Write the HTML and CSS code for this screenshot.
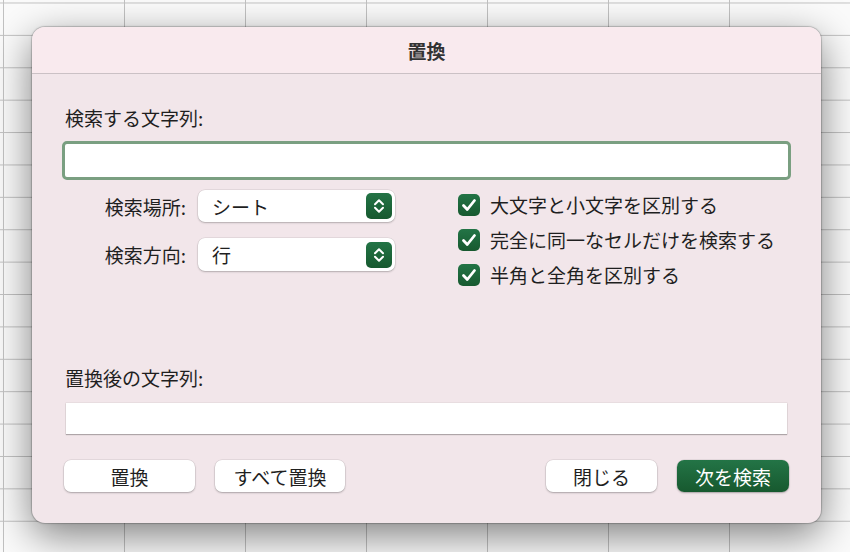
FILE: index.html
```html
<!DOCTYPE html>
<html lang="ja">
<head>
    <meta charset="UTF-8">
    <meta name="viewport" content="width=device-width, initial-scale=1.0">
    <title>置換</title>
    <link rel="stylesheet" href="styles.css">
</head>
<body>
    <div class="sheet">
        <div class="dialog">
            <div class="titlebar">置換</div>

            <div class="content">
                <div class="field-label">検索する文字列:</div>
                <div class="find-input"></div>

                <div class="options">
                    <div class="selects">
                        <div class="select-row">
                            <span class="select-label">検索場所:</span>
                            <div class="popup">
                                <span>シート</span>
                                <span class="stepper">
                                    <svg width="26" height="26" viewBox="0 0 26 26"><path d="M9 11.2 L13 7.2 L17 11.2 M9 14.8 L13 18.8 L17 14.8" fill="none" stroke="#fff" stroke-width="2" stroke-linecap="round" stroke-linejoin="round"/></svg>
                                </span>
                            </div>
                        </div>
                        <div class="select-row">
                            <span class="select-label">検索方向:</span>
                            <div class="popup">
                                <span>行</span>
                                <span class="stepper">
                                    <svg width="26" height="26" viewBox="0 0 26 26"><path d="M9 11.2 L13 7.2 L17 11.2 M9 14.8 L13 18.8 L17 14.8" fill="none" stroke="#fff" stroke-width="2" stroke-linecap="round" stroke-linejoin="round"/></svg>
                                </span>
                            </div>
                        </div>
                    </div>

                    <div class="checks">
                        <div class="check-row">
                            <span class="checkbox"><svg width="22" height="22" viewBox="0 0 22 22"><path d="M5.5 11.5 L9.3 15.5 L16.5 6.5" fill="none" stroke="#fff" stroke-width="2.8" stroke-linecap="round" stroke-linejoin="round"/></svg></span>
                            <span>大文字と小文字を区別する</span>
                        </div>
                        <div class="check-row">
                            <span class="checkbox"><svg width="22" height="22" viewBox="0 0 22 22"><path d="M5.5 11.5 L9.3 15.5 L16.5 6.5" fill="none" stroke="#fff" stroke-width="2.8" stroke-linecap="round" stroke-linejoin="round"/></svg></span>
                            <span>完全に同一なセルだけを検索する</span>
                        </div>
                        <div class="check-row">
                            <span class="checkbox"><svg width="22" height="22" viewBox="0 0 22 22"><path d="M5.5 11.5 L9.3 15.5 L16.5 6.5" fill="none" stroke="#fff" stroke-width="2.8" stroke-linecap="round" stroke-linejoin="round"/></svg></span>
                            <span>半角と全角を区別する</span>
                        </div>
                    </div>
                </div>

                <div class="field-label replace-label">置換後の文字列:</div>
                <div class="replace-input"></div>

                <div class="buttons">
                    <div class="btn-group">
                        <div class="btn btn-replace">置換</div>
                        <div class="btn btn-replace-all">すべて置換</div>
                    </div>
                    <div class="btn-group">
                        <div class="btn btn-close">閉じる</div>
                        <div class="btn btn-default">次を検索</div>
                    </div>
                </div>
            </div>
        </div>
    </div>
</body>
</html>
```

FILE: styles.css
```css
html, body {
    margin: 0;
    padding: 0;
}
body {
    width: 850px;
    height: 552px;
    overflow: hidden;
    font-family: "Noto Sans CJK JP", "Noto Sans", sans-serif;
    color: #1f1f1f;
    background-color: #fbfbfb;
    background-image:
        linear-gradient(to right, #c2c2c2 1px, transparent 1px),
        linear-gradient(to bottom, #c2c2c2 1px, transparent 1px);
    background-size: 121px 100%, 100% 32.4px;
    background-position: 3px 0, 0 2.5px;
}
.sheet {
    padding: 27px 0 0 32px;
}
.dialog {
    width: 789px;
    height: 496px;
    box-sizing: border-box;
    background: #f2e6ea;
    border-radius: 13px;
    box-shadow: 0 12px 40px rgba(0,0,0,0.5), 0 0 3px rgba(0,0,0,0.2), 0 0 0 1px rgba(0,0,0,0.12);
    overflow: hidden;
}
.titlebar {
    height: 46px;
    border-bottom: 1px solid #cbc1c5;
    background: #f9eaee;
    display: flex;
    align-items: center;
    justify-content: center;
    font-size: 19px;
    font-weight: bold;
    color: #333;
}
.content {
    padding: 32px 30px 0 30px;
}
.field-label {
    font-size: 19px;
    line-height: 24px;
    padding-left: 3px;
}
.find-input {
    margin-top: 11px;
    height: 39px;
    box-sizing: border-box;
    background: #fff;
    border: 3px solid #7a9f81;
    border-radius: 5px;
}
.options {
    display: flex;
    align-items: flex-start;
    height: 102px;
    margin-top: 10px;
}
.selects {
    display: flex;
    flex-direction: column;
    gap: 16px;
}
.select-row {
    display: flex;
    align-items: center;
    gap: 12px;
}
.select-label {
    width: 124px;
    text-align: right;
    font-size: 19px;
}
.popup {
    width: 197px;
    height: 32px;
    box-sizing: border-box;
    background: #fff;
    border-radius: 7px;
    box-shadow: 0 1px 2px rgba(0,0,0,0.22), 0 0 0 0.5px rgba(0,0,0,0.1);
    display: flex;
    align-items: center;
    justify-content: space-between;
    padding: 0 3px 0 14px;
    font-size: 19px;
}
.select-row + .select-row .popup {
    height: 33px;
}
.stepper {
    width: 26px;
    height: 26px;
    border-radius: 5px;
    background: linear-gradient(#237446, #17592f);
    display: flex;
}
.checks {
    margin-left: 63px;
    margin-top: -3px;
}
.check-row {
    height: 35px;
    display: flex;
    align-items: center;
    gap: 10px;
    font-size: 19px;
}
.checkbox {
    width: 22px;
    height: 22px;
    border-radius: 5px;
    background: linear-gradient(#237446, #17592f);
    display: flex;
}
.replace-label {
    margin-top: 74px;
}
.replace-input {
    margin: 13px 4px 0 4px;
    height: 31px;
    background: #fff;
    box-shadow: 0 1px 1px rgba(0,0,0,0.25), 0 0 0 0.5px rgba(0,0,0,0.08);
}
.buttons {
    display: flex;
    justify-content: space-between;
    margin: 26px 2px 0 2px;
}
.btn-group {
    display: flex;
    gap: 20px;
}
.btn {
    height: 32px;
    box-sizing: border-box;
    border-radius: 7px;
    background: #fff;
    box-shadow: 0 1px 2px rgba(0,0,0,0.25), 0 0 0 0.5px rgba(0,0,0,0.1);
    display: flex;
    align-items: center;
    justify-content: center;
    font-size: 19px;
}
.btn-replace { width: 131px; }
.btn-replace-all { width: 130px; }
.btn-close { width: 111px; }
.btn-default {
    width: 112px;
    color: #fff;
    background: linear-gradient(#237446, #17592f);
}
```
